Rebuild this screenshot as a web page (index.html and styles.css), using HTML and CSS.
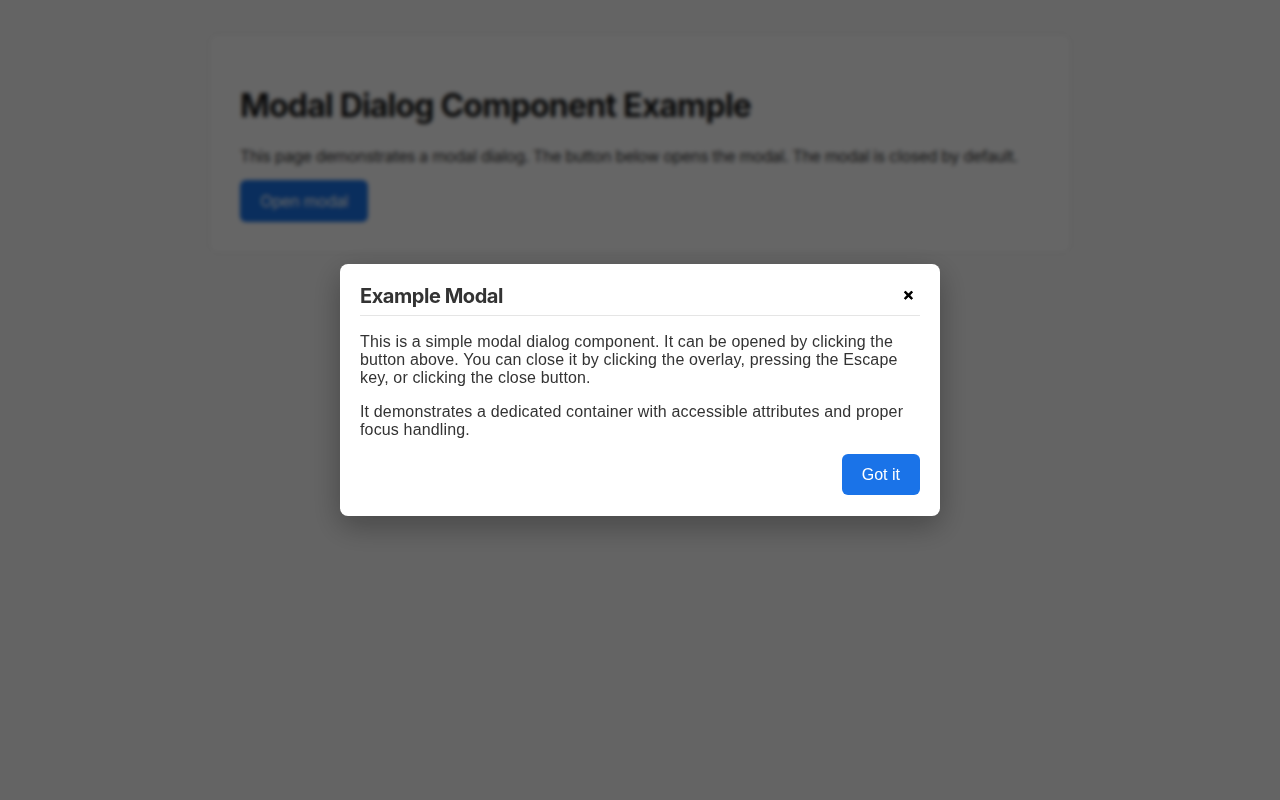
FILE: index.html
```html
<!DOCTYPE html>
<html lang="en">
<head>
<meta charset="utf-8">
<title>Modal Dialog Component Example</title>
<link rel="stylesheet" href="styles.css">
</head>
<body>
  <main class="page">
    <section class="card">
      <h1 class="card-title">Modal Dialog Component Example</h1>
      <p class="card-text">This page demonstrates a modal dialog. The button below opens the modal. The modal is closed by default.</p>
      <button class="btn" type="button">Open modal</button>
    </section>
  </main>

  <div class="overlay">
    <div class="modal" role="dialog" aria-modal="true" aria-labelledby="modal-title">
      <header class="modal-header">
        <h2 class="modal-title" id="modal-title">Example Modal</h2>
        <button class="modal-close" type="button" aria-label="Close">&#x2715;</button>
      </header>
      <div class="modal-body">
        <p>This is a simple modal dialog component. It can be opened by clicking the button above. You can close it by clicking the overlay, pressing the Escape key, or clicking the close button.</p>
        <p>It demonstrates a dedicated container with accessible attributes and proper focus handling.</p>
      </div>
      <footer class="modal-footer">
        <button class="btn btn-modal" type="button">Got it</button>
      </footer>
    </div>
  </div>
</body>
</html>
```

FILE: styles.css
```css
* { box-sizing: border-box; }

html, body { height: 100%; }

body {
  margin: 0;
  background: #fafafa;
  font-family: Inter, "Noto Sans", sans-serif;
  color: #1a1a1a;
}

.page {
  padding: 33px 0;
  display: flex;
  justify-content: center;
}

.card {
  width: 864px;
  background: #ffffff;
  border: 1px solid #e6e6e6;
  border-radius: 10px;
  padding: 53px 31px 31px;
}

.card-title {
  margin: 0 0 20px;
  font-size: 32px;
  font-weight: 700;
  line-height: 1.2;
  letter-spacing: -0.8px;
}

.card-text {
  margin: 0 0 12px;
  font-size: 16px;
  line-height: 1.4;
  letter-spacing: -0.35px;
  color: #333;
}

.btn {
  border: none;
  border-radius: 6px;
  background: #1a73e8;
  color: #fff;
  font-family: inherit;
  font-size: 16px;
  letter-spacing: -0.35px;
  padding: 11px 20px;
  cursor: pointer;
}

.overlay {
  position: fixed;
  inset: 0;
  background: rgba(0, 0, 0, 0.6);
  backdrop-filter: blur(2px);
  display: flex;
  justify-content: center;
  align-items: flex-start;
  padding-top: 264px;
}

.modal {
  width: 600px;
  background: #fff;
  border-radius: 8px;
  padding: 20px 20px 21px;
  box-shadow: 0 10px 30px rgba(0, 0, 0, 0.3);
  font-family: "Liberation Sans", Arial, sans-serif;
  color: #333;
}

.modal-header {
  display: flex;
  align-items: center;
  justify-content: space-between;
  padding-bottom: 7px;
  border-bottom: 1px solid #e5e5e5;
}

.modal-title {
  margin: 0;
  font-family: Inter, "Noto Sans", sans-serif;
  font-size: 20px;
  font-weight: 700;
  line-height: 24px;
  letter-spacing: -0.45px;
  color: #333;
}

.modal-close {
  border: none;
  background: none;
  padding: 0 6px;
  font-size: 13px;
  font-weight: 900;
  color: #000;
  line-height: 24px;
  cursor: pointer;
  -webkit-text-stroke: 0.6px #000;
}

.modal-body p {
  margin: 17px 0 0;
  font-size: 16px;
  line-height: 18px;
  letter-spacing: 0.15px;
}

.modal-body p + p {
  margin-top: 16px;
}

.modal-footer {
  display: flex;
  justify-content: flex-end;
  margin-top: 15px;
}

.btn-modal {
  font-family: "Liberation Sans", Arial, sans-serif;
  letter-spacing: 0;
  padding: 12px 20px 11px;
  line-height: 18px;
}
```
